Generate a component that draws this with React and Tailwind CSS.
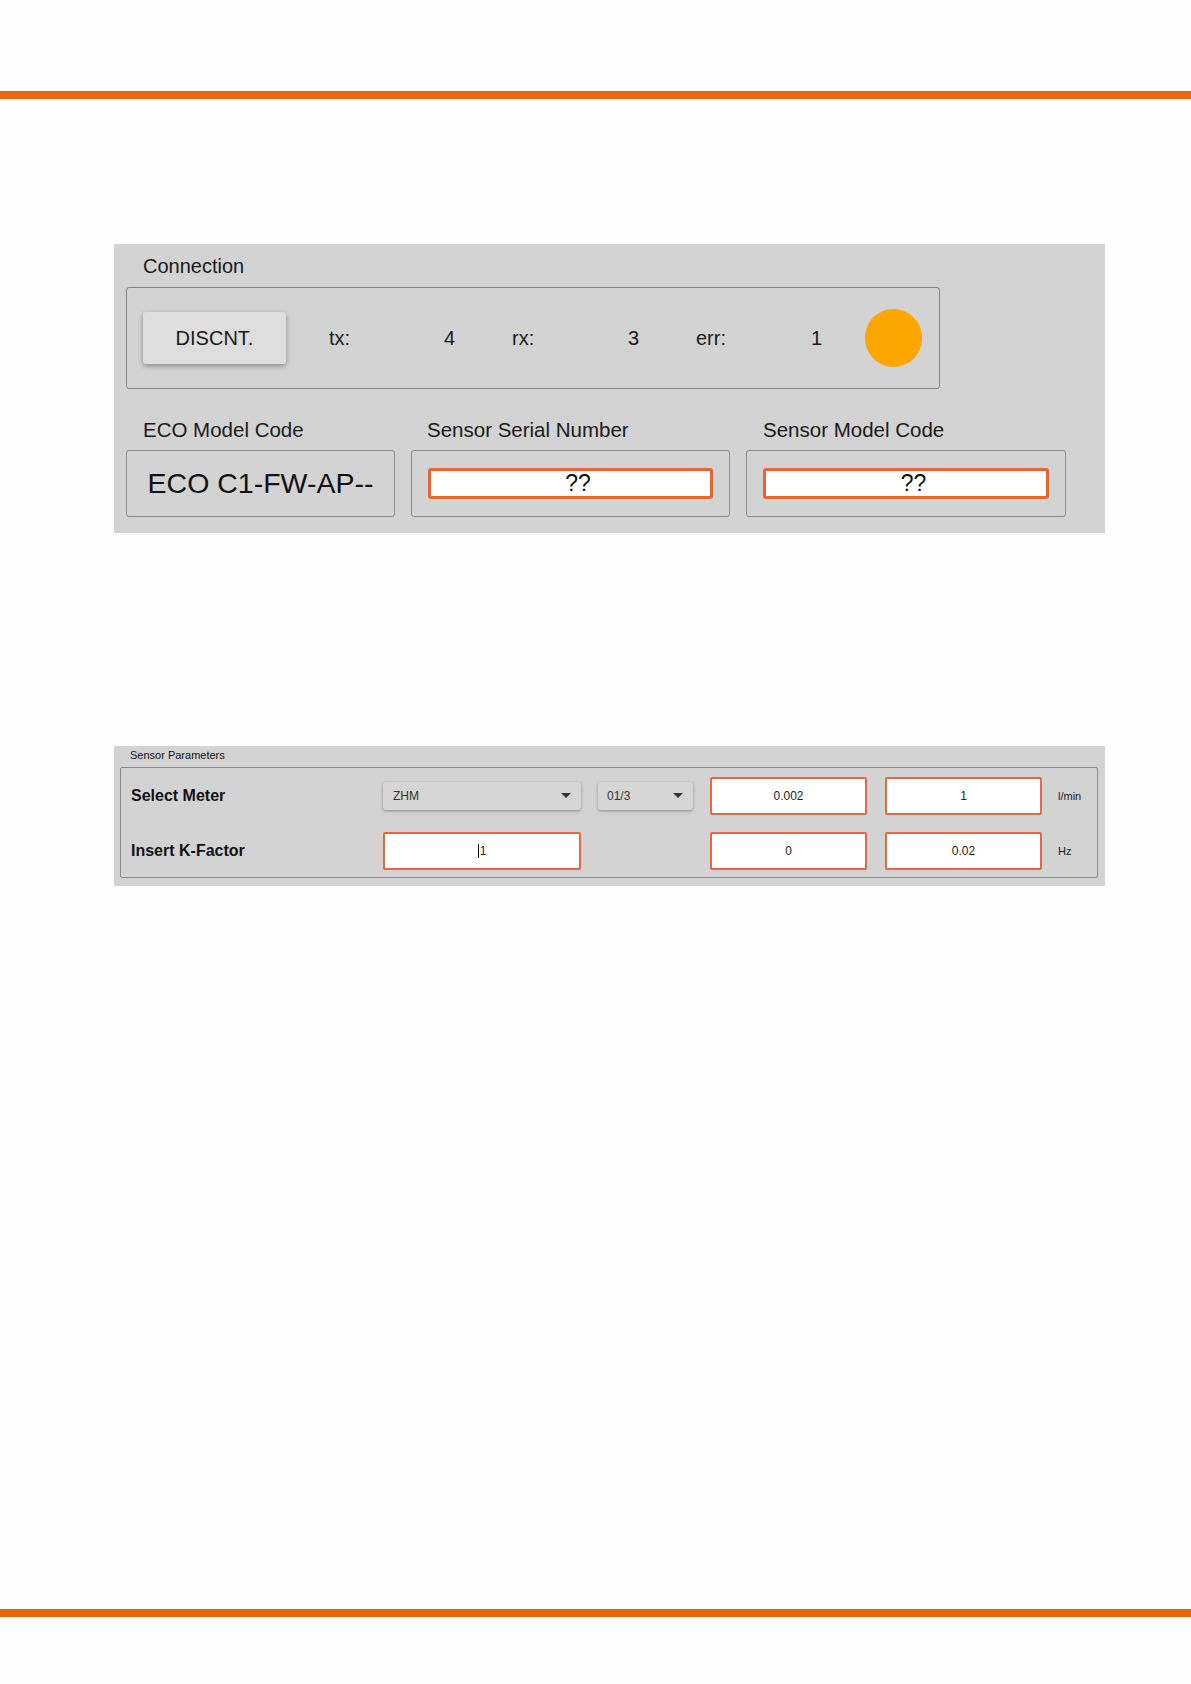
import React from "react";

const font = { fontFamily: '"Liberation Sans", Arial, Helvetica, sans-serif' };

function Caret() {
  return (
    <svg width="10" height="6" viewBox="0 0 10 6" className="shrink-0">
      <path d="M0 0 L10 0 L5 5 Z" fill="#333" />
    </svg>
  );
}

function ParamInput({ value, w = "w-[157px]", cursor = false }) {
  return (
    <div
      className={`${w} h-[38px] shrink-0 bg-white border-2 border-[#e9673c] rounded-[2px] flex items-center justify-center text-[12px] text-[#222]`}
    >
      {cursor && <span className="inline-block w-px h-[14px] bg-[#111] mr-px" />}
      {value}
    </div>
  );
}

export default function App() {
  return (
    <div className="w-[1191px] min-h-[1684px] bg-[#fefefe] pt-[91px]" style={font}>
      <div className="h-[8px] bg-[#e9660f]" />

      {/* Connection panel */}
      <div className="mt-[145px] ml-[114px] w-[991px] bg-[#d3d3d3] pl-[12px] pt-[11px] pb-[16px]">
        <div className="pl-[17px] text-[20px] leading-[23px] text-[#1a1a1a] mb-[9px]">Connection</div>
        <div className="w-[814px] h-[102px] border-[1.5px] border-[#858585] rounded-[3px] flex items-center pl-[16px] text-[20px] text-[#1a1a1a]">
          <div className="w-[143px] h-[52px] bg-[#dedede] rounded-[3px] shadow-[0_2px_5px_rgba(0,0,0,0.35)] flex items-center justify-center">
            DISCNT.
          </div>
          <span className="ml-[43px] w-[115px]">tx:</span>
          <span className="w-[68px]">4</span>
          <span className="w-[116px]">rx:</span>
          <span className="w-[68px]">3</span>
          <span className="w-[115px]">err:</span>
          <span className="w-[54px]">1</span>
          <div className="w-[57px] h-[58px] rounded-full bg-[#fca700]" />
        </div>

        <div className="mt-[30px] flex gap-[16px]">
          <div className="w-[269px]">
            <div className="pl-[17px] text-[20.5px] leading-[22px] text-[#1a1a1a] mb-[9px]">ECO Model Code</div>
            <div className="h-[67px] border-[1.5px] border-[#8a8a8a] rounded-[3px] flex items-center justify-center text-[28.5px] text-[#111]">
              ECO C1-FW-AP--
            </div>
          </div>
          <div className="w-[319px]">
            <div className="pl-[16px] text-[20.5px] leading-[22px] text-[#1a1a1a] mb-[9px]">Sensor Serial Number</div>
            <div className="h-[67px] border-[1.5px] border-[#8a8a8a] rounded-[3px] flex items-center px-[16px]">
              <div className="w-full h-[31px] bg-white border-[3px] border-[#ec6434] rounded-[3px] flex items-center justify-center pl-[15px] text-[23px] text-[#111]">
                ??
              </div>
            </div>
          </div>
          <div className="w-[320px]">
            <div className="pl-[17px] text-[20.5px] leading-[22px] text-[#1a1a1a] mb-[9px]">Sensor Model Code</div>
            <div className="h-[67px] border-[1.5px] border-[#8a8a8a] rounded-[3px] flex items-center px-[16px]">
              <div className="w-full h-[31px] bg-white border-[3px] border-[#ec6434] rounded-[3px] flex items-center justify-center pl-[15px] text-[23px] text-[#111]">
                ??
              </div>
            </div>
          </div>
        </div>
      </div>

      {/* Sensor Parameters panel */}
      <div className="mt-[213px] ml-[114px] w-[991px] bg-[#d3d3d3] pl-[6px] pr-[7px] pt-[2px] pb-[8px]">
        <div className="pl-[10px] text-[11px] leading-[14px] text-[#111] mb-[5px]">Sensor Parameters</div>
        <div className="h-[111px] border border-[#8a8a8a] rounded-[2px] pl-[10px] pt-[9px] flex flex-col gap-[17px]">
          <div className="flex items-center h-[38px]">
            <div className="w-[252px] text-[16px] font-bold text-[#111]">Select Meter</div>
            <div className="w-[198px] h-[28px] bg-[#d6d6d6] rounded-[3px] shadow-[0_1px_3px_rgba(0,0,0,0.35)] flex items-center justify-between pl-[10px] pr-[10px] text-[12px] text-[#333]">
              <span>ZHM</span>
              <Caret />
            </div>
            <div className="ml-[17px] w-[95px] h-[28px] bg-[#d6d6d6] rounded-[3px] shadow-[0_1px_3px_rgba(0,0,0,0.35)] flex items-center justify-between pl-[9px] pr-[10px] text-[12px] text-[#333]">
              <span>01/3</span>
              <Caret />
            </div>
            <div className="ml-[17px]">
              <ParamInput value="0.002" />
            </div>
            <div className="ml-[18px]">
              <ParamInput value="1" />
            </div>
            <div className="ml-[16px] text-[11px] text-[#222]">l/min</div>
          </div>
          <div className="flex items-center h-[38px]">
            <div className="w-[252px] text-[16px] font-bold text-[#111]">Insert K-Factor</div>
            <ParamInput value="1" w="w-[198px]" cursor />
            <div className="ml-[129px]">
              <ParamInput value="0" />
            </div>
            <div className="ml-[18px]">
              <ParamInput value="0.02" />
            </div>
            <div className="ml-[16px] text-[11px] text-[#222]">Hz</div>
          </div>
        </div>
      </div>

      <div className="mt-[723px] h-[8px] bg-[#ec650d]" />
    </div>
  );
}
